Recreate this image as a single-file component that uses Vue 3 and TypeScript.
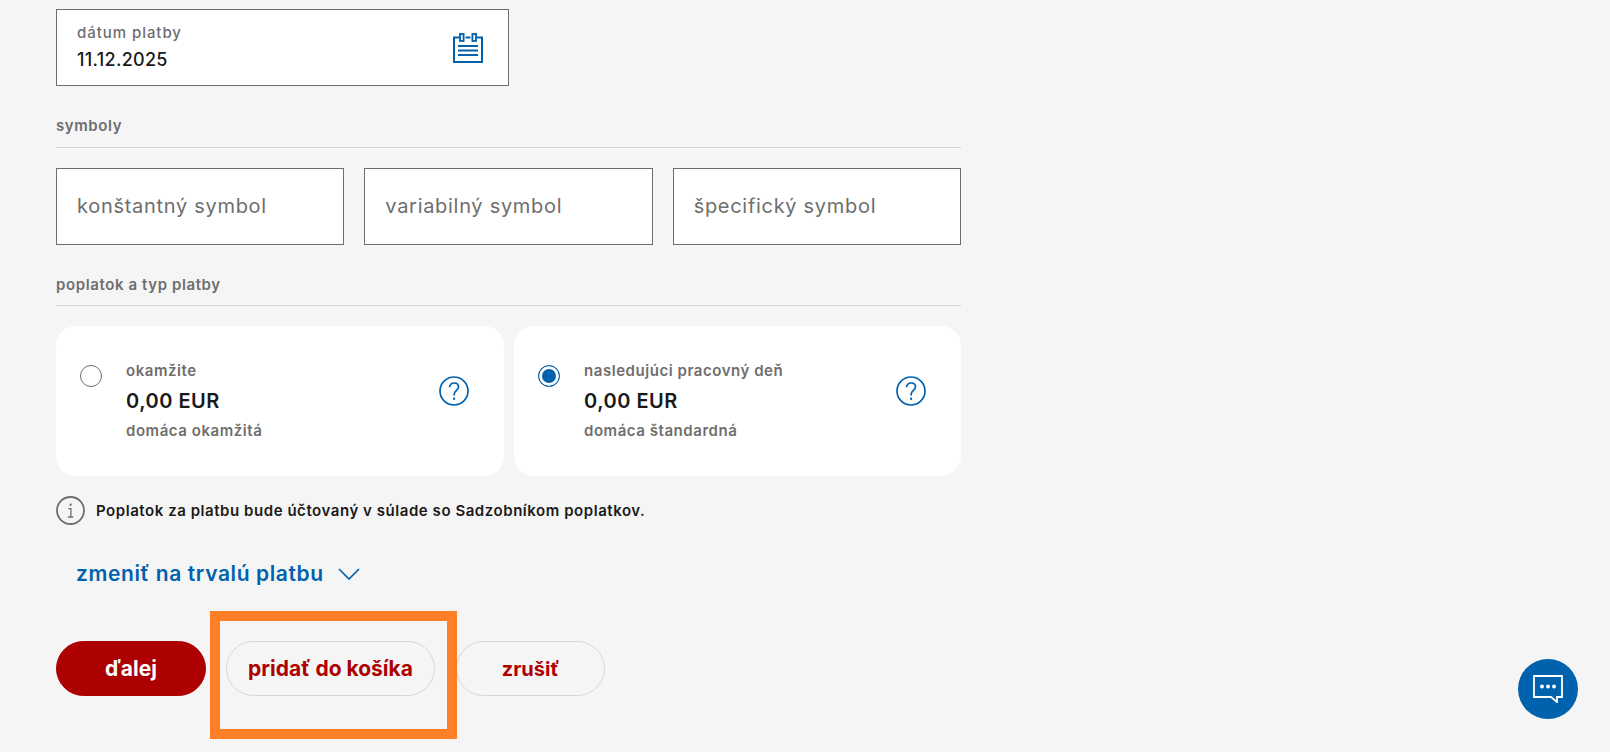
<script setup lang="ts">
interface FeeOption {
  title: string;
  amount: string;
  kind: string;
  selected: boolean;
}

const symbols = ['konštantný symbol', 'variabilný symbol', 'špecifický symbol'];

const feeOptions: FeeOption[] = [
  { title: 'okamžite', amount: '0,00 EUR', kind: 'domáca okamžitá', selected: false },
  { title: 'nasledujúci pracovný deň', amount: '0,00 EUR', kind: 'domáca štandardná', selected: true },
];
</script>

<template>
  <div class="page">
    <form class="payment" @submit.prevent>
      <div class="date-field">
        <div class="date-text">
          <span class="date-label">dátum platby</span>
          <span class="date-value">11.12.2025</span>
        </div>
        <svg class="calendar" width="30" height="30" viewBox="0 0 30 30" fill="none" stroke="#0061ad">
          <path d="M7 4.5H1v24.5h28V4.5H23" stroke-width="2" />
          <path d="M12.5 4.5h5" stroke-width="2" />
          <rect x="7" y="1" width="3.6" height="7" stroke-width="1.8" fill="#fff" />
          <rect x="19.4" y="1" width="3.6" height="7" stroke-width="1.8" fill="#fff" />
          <path d="M5 13h20M5 17.5h20M5 22h20" stroke-width="2" />
        </svg>
      </div>

      <h3 class="section-title symbols-title">symboly</h3>
      <div class="symbols">
        <div v-for="symbol in symbols" :key="symbol" class="symbol-field">{{ symbol }}</div>
      </div>

      <h3 class="section-title fee-title">poplatok a typ platby</h3>
      <div class="fees">
        <div v-for="fee in feeOptions" :key="fee.title" class="fee-card">
          <span class="radio" :class="{ checked: fee.selected }"></span>
          <div class="fee-text">
            <span class="fee-name">{{ fee.title }}</span>
            <span class="fee-amount">{{ fee.amount }}</span>
            <span class="fee-name">{{ fee.kind }}</span>
          </div>
          <svg class="help" width="30" height="30" viewBox="0 0 30 30" fill="none" stroke="#0061ad">
            <circle cx="15" cy="15" r="14" stroke-width="1.7" />
            <path d="M10.6 11.2c0-2.7 2-4.2 4.5-4.2s4.4 1.6 4.4 3.9c0 3.4-4.4 3.6-4.4 7.6v1" stroke-width="1.7" />
            <path d="M15.1 21.6v2.2" stroke-width="2" />
          </svg>
        </div>
      </div>

      <div class="notice">
        <svg width="29" height="29" viewBox="0 0 29 29" fill="none" stroke="#6e6e6e">
          <circle cx="14.5" cy="14.5" r="13.5" stroke-width="1.8" />
          <path d="M12.4 12.6h2.5v8.2M12 21h5.2" stroke-width="1.3" />
          <path d="M14.6 7.6v2.2" stroke-width="2" />
        </svg>
        <span>Poplatok za platbu bude účtovaný v súlade so Sadzobníkom poplatkov.</span>
      </div>

      <a class="toggle">
        zmeniť na trvalú platbu
        <svg width="22" height="12" viewBox="0 0 22 12" fill="none" stroke="#0061ad" stroke-width="1.7">
          <path d="M1 1l10 10L21 1" />
        </svg>
      </a>

      <div class="actions">
        <button class="btn primary" type="button">ďalej</button>
        <button class="btn basket" type="button">pridať do košíka</button>
        <button class="btn cancel" type="button">zrušiť</button>
      </div>
    </form>

    <div class="highlight"></div>

    <button class="chat" type="button" aria-label="chat">
      <svg width="30" height="28" viewBox="0 0 30 28" fill="none">
        <path d="M1 1h28v21h-5v5l-6-5H1z" stroke="#fff" stroke-width="1.8" />
        <circle cx="9" cy="11.5" r="2" fill="#fff" />
        <circle cx="15" cy="11.5" r="2" fill="#fff" />
        <circle cx="21" cy="11.5" r="2" fill="#fff" />
      </svg>
    </button>
  </div>
</template>

<style>
html,
body {
  margin: 0;
  background: #f5f5f5;
}
</style>

<style scoped>
.page {
  position: relative;
  height: 752px;
  overflow: hidden;
  padding: 9px 0 0 56px;
  box-sizing: border-box;
  background: #f5f5f5;
  font-family: Inter, "Liberation Sans", sans-serif;
  color: #1a1a1a;
}

.payment {
  width: 905px;
}

.date-field {
  width: 453px;
  height: 77px;
  box-sizing: border-box;
  display: flex;
  align-items: center;
  justify-content: space-between;
  padding: 0 25px 0 20px;
  background: #fff;
  border: 1px solid #6e6e6e;
}

.date-text {
  display: flex;
  flex-direction: column;
  gap: 6px;
}

.date-label {
  font-size: 15px;
  font-weight: 500;
  letter-spacing: 0.95px;
  line-height: 18px;
  color: #6e6e6e;
}

.date-value {
  font-size: 18px;
  font-weight: 500;
  letter-spacing: 0.3px;
  line-height: 24px;
}

.section-title {
  margin: 0;
  padding-bottom: 12px;
  border-bottom: 1px solid #d6d6d6;
  font-size: 15px;
  font-weight: 600;
  letter-spacing: 0.6px;
  line-height: 18px;
  color: #6e6e6e;
}

.symbols-title {
  margin-top: 31px;
}

.symbols {
  display: grid;
  grid-template-columns: repeat(3, 1fr);
  gap: 20px;
  margin-top: 20px;
}

.symbol-field {
  height: 77px;
  box-sizing: border-box;
  display: flex;
  align-items: center;
  padding: 0 0 2px 20px;
  background: #fff;
  border: 1px solid #6e6e6e;
  font-size: 20px;
  letter-spacing: 0.7px;
  color: #6e6e6e;
}

.fee-title {
  margin-top: 31px;
  padding-bottom: 11px;
}

.fees {
  display: grid;
  grid-template-columns: 448px 447px;
  gap: 10px;
  margin-top: 20px;
}

.fee-card {
  height: 150px;
  box-sizing: border-box;
  display: flex;
  align-items: flex-start;
  padding: 36px 35px 0 24px;
  background: #fff;
  border-radius: 20px;
}

.radio {
  width: 22px;
  height: 22px;
  box-sizing: border-box;
  margin-top: 3px;
  border: 1px solid #6e6e6e;
  border-radius: 50%;
  background: #fff;
}

.radio.checked {
  border-color: #0061ad;
  background: #0061ad;
  box-shadow: inset 0 0 0 3px #fff;
}

.fee-text {
  flex: 1;
  display: flex;
  flex-direction: column;
  margin-left: 24px;
}

.fee-name {
  font-size: 15px;
  font-weight: 600;
  letter-spacing: 0.55px;
  line-height: 18px;
  color: #6e6e6e;
}

.fee-amount {
  margin: 8px 0 8px;
  font-size: 20px;
  font-weight: 600;
  letter-spacing: 0.5px;
  line-height: 26px;
}

.help {
  margin-top: 14px;
}

.notice {
  display: flex;
  align-items: center;
  gap: 11px;
  margin-top: 20px;
  font-size: 15px;
  font-weight: 600;
  letter-spacing: 0.55px;
}

.toggle {
  display: flex;
  align-items: center;
  gap: 14px;
  margin: 36px 0 0 20px;
  font-size: 21px;
  font-weight: 600;
  letter-spacing: 0.6px;
  line-height: 26px;
  color: #0061ad;
}

.actions {
  display: flex;
  align-items: center;
  margin-top: 54px;
}

.btn {
  height: 55px;
  box-sizing: border-box;
  border: 1px solid #d6d6d6;
  border-radius: 28px;
  background: transparent;
  font-family: inherit;
  font-size: 21px;
  font-weight: 700;
  color: #ad0000;
}

.primary {
  width: 150px;
  border-color: #ad0000;
  background: #ad0000;
  color: #fff;
}

.basket {
  width: 209px;
  margin-left: 20px;
}

.cancel {
  width: 149px;
  margin-left: 21px;
  font-size: 20px;
}

.highlight {
  position: absolute;
  left: 210px;
  top: 611px;
  width: 247px;
  height: 128px;
  box-sizing: border-box;
  border: 10px solid #ff7f27;
  pointer-events: none;
}

.chat {
  position: absolute;
  left: 1518px;
  top: 659px;
  width: 60px;
  height: 60px;
  display: flex;
  align-items: center;
  justify-content: center;
  padding: 0;
  border: none;
  border-radius: 50%;
  background: #0061ad;
}
</style>
